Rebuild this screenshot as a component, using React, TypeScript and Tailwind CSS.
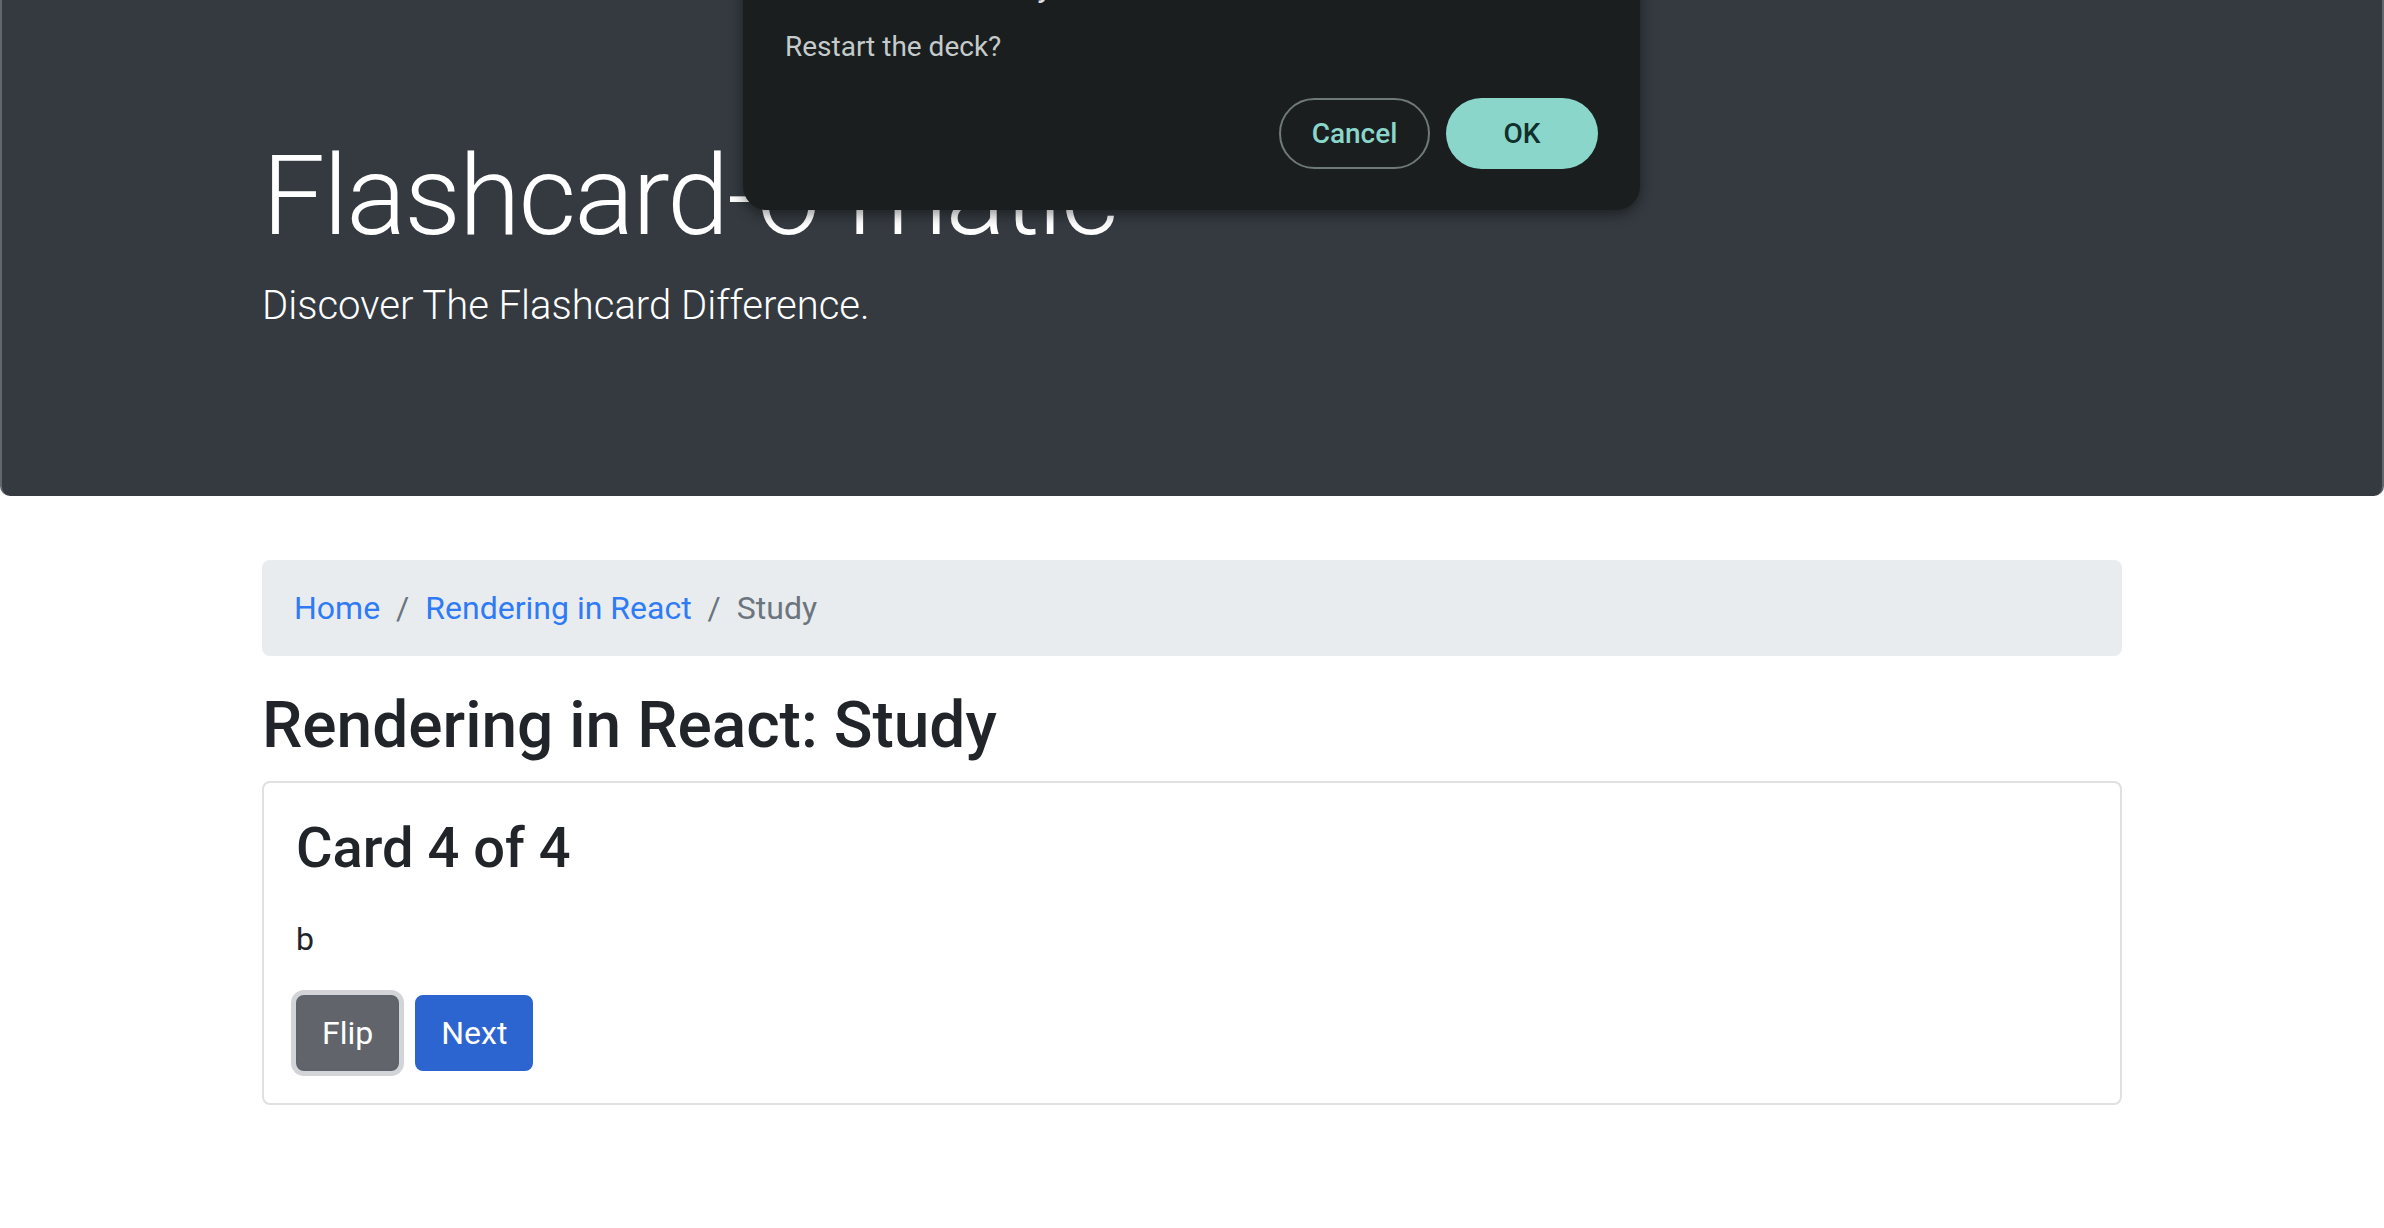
import React from "react";

export default function App() {
  const font = { fontFamily: "Roboto, 'Noto Sans', sans-serif" };
  return (
    <div className="relative min-h-screen bg-white text-[#212529]" style={font}>
      {/* Jumbotron */}
      <div className="h-[496px] bg-[#343a40] rounded-b-[10px] border-x-2 border-[#62676d] pt-[129px]">
        <div className="mx-auto w-[1920px] px-[30px]">
          <h1 className="text-[112px] font-light leading-[1.2] tracking-[-2px] text-white">Flashcard-o-matic</h1>
          <p className="mt-[13px] text-[40px] font-light leading-[1.5] text-white">
            Discover The Flashcard Difference.
          </p>
        </div>
      </div>

      {/* Main container */}
      <div className="mx-auto mt-[64px] w-[1920px] px-[30px]">
        <nav className="flex h-[96px] items-center rounded-[8px] bg-[#e9ecef] px-[32px] text-[32px] leading-[48px]">
          <a className="text-[#2f7bf5]">Home</a>
          <span className="px-[16px] text-[#6c757d]">/</span>
          <a className="text-[#2f7bf5]">Rendering in React</a>
          <span className="px-[16px] text-[#6c757d]">/</span>
          <span className="text-[#6c757d]">Study</span>
        </nav>

        <h2 className="mt-[32px] mb-[16px] text-[64px] font-medium leading-[1.2]">
          Rendering in React: Study
        </h2>

        <div className="rounded-[8px] border-2 border-[#dfe0e1] p-[32px]">
          <h3 className="text-[56px] font-medium leading-[1.2]">Card 4 of 4</h3>
          <p className="mt-[33px] text-[32px] leading-[1.5]">b</p>
          <div className="mt-[32px] flex">
            <button className="mr-[16px] h-[76px] rounded-[8px] border-2 border-[#5c636a] bg-[#61656b] px-[24px] text-[32px] text-white shadow-[0_0_0_5px_#d2d4d7]">
              Flip
            </button>
            <button className="h-[76px] rounded-[8px] border-2 border-[#2c64d0] bg-[#2c64d0] px-[24px] text-[32px] text-white">
              Next
            </button>
          </div>
        </div>
      </div>

      {/* Native-like confirm dialog */}
      <div className="absolute left-[743px] top-[-74px] w-[897px] rounded-[24px] bg-[#1a1e1f] px-[42px] pt-[40px] pb-[41px] shadow-[0_4px_14px_rgba(0,0,0,0.45)]">
        <div className="text-[32px] leading-[40px] text-[#e1e3e3]">localhost:3000 says</div>
        <div className="mt-[21px] text-[28px] leading-[40px] text-[#c4cbca]">Restart the deck?</div>
        <div className="mt-[31px] flex justify-end gap-[16px]">
          <button className="h-[71px] w-[151px] rounded-full border-2 border-[#6f7a78] text-[28px] font-medium text-[#8ad6ca]">
            Cancel
          </button>
          <button className="h-[71px] w-[152px] rounded-full bg-[#8ad6ca] text-[28px] font-medium text-[#10302c]">
            OK
          </button>
        </div>
      </div>
    </div>
  );
}
